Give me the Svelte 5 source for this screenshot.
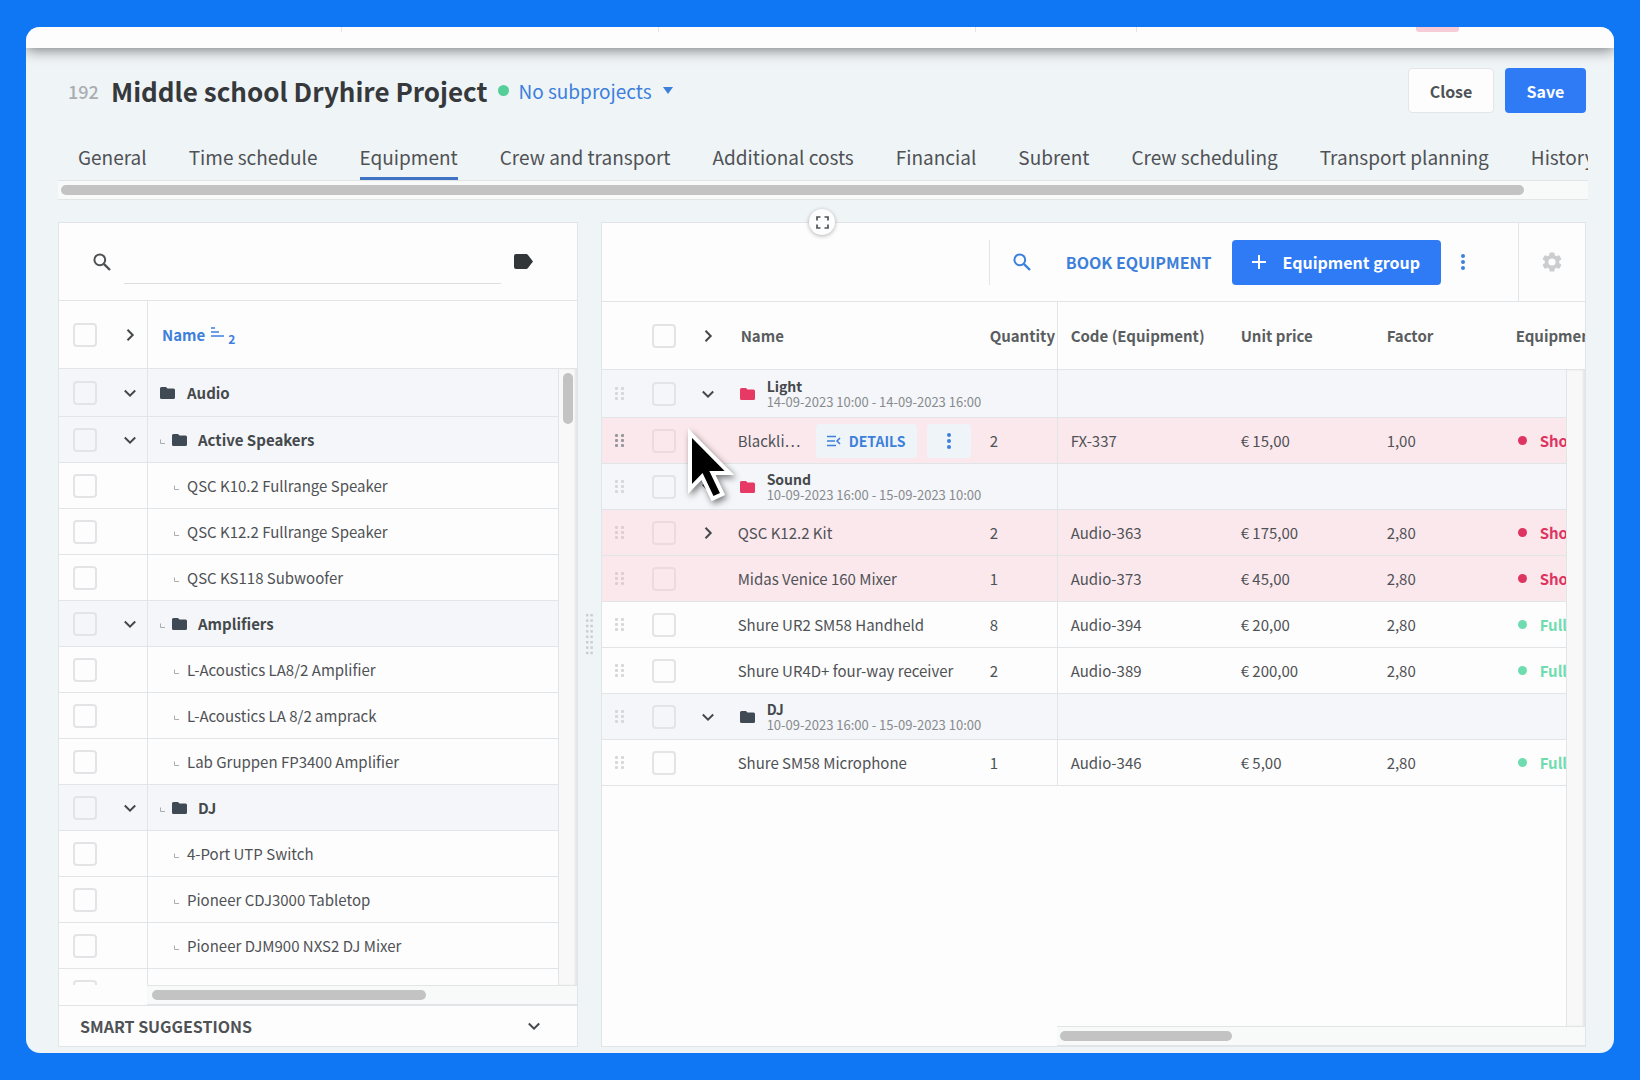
<script lang="ts">
	type TreeRow = { kind: 'root' | 'group' | 'item'; name: string };
	type Status = 'short' | 'full';
	type Line = {
		kind: 'group' | 'item';
		name: string;
		dates?: string;
		late?: boolean;
		expand?: 'open' | 'closed';
		hover?: boolean;
		qty?: number;
		code?: string;
		price?: string;
		factor?: string;
		status?: Status;
	};

	const tabs = [
		'General',
		'Time schedule',
		'Equipment',
		'Crew and transport',
		'Additional costs',
		'Financial',
		'Subrent',
		'Crew scheduling',
		'Transport planning',
		'History'
	];
	let activeTab = $state('Equipment');
	let query = $state('');

	const tree: TreeRow[] = [
		{ kind: 'root', name: 'Audio' },
		{ kind: 'group', name: 'Active Speakers' },
		{ kind: 'item', name: 'QSC K10.2 Fullrange Speaker' },
		{ kind: 'item', name: 'QSC K12.2 Fullrange Speaker' },
		{ kind: 'item', name: 'QSC KS118 Subwoofer' },
		{ kind: 'group', name: 'Amplifiers' },
		{ kind: 'item', name: 'L-Acoustics LA8/2 Amplifier' },
		{ kind: 'item', name: 'L-Acoustics LA 8/2 amprack' },
		{ kind: 'item', name: 'Lab Gruppen FP3400 Amplifier' },
		{ kind: 'group', name: 'DJ' },
		{ kind: 'item', name: '4-Port UTP Switch' },
		{ kind: 'item', name: 'Pioneer CDJ3000 Tabletop' },
		{ kind: 'item', name: 'Pioneer DJM900 NXS2 DJ Mixer' },
		{ kind: 'item', name: '' }
	];

	const lines: Line[] = [
		{ kind: 'group', name: 'Light', dates: '14-09-2023 10:00 - 14-09-2023 16:00', late: true, expand: 'open' },
		{ kind: 'item', name: 'Blackli…', hover: true, qty: 2, code: 'FX-337', price: '€ 15,00', factor: '1,00', status: 'short' },
		{ kind: 'group', name: 'Sound', dates: '10-09-2023 16:00 - 15-09-2023 10:00', late: true, expand: 'open' },
		{ kind: 'item', name: 'QSC K12.2 Kit', expand: 'closed', qty: 2, code: 'Audio-363', price: '€ 175,00', factor: '2,80', status: 'short' },
		{ kind: 'item', name: 'Midas Venice 160 Mixer', qty: 1, code: 'Audio-373', price: '€ 45,00', factor: '2,80', status: 'short' },
		{ kind: 'item', name: 'Shure UR2 SM58 Handheld', qty: 8, code: 'Audio-394', price: '€ 20,00', factor: '2,80', status: 'full' },
		{ kind: 'item', name: 'Shure UR4D+ four-way receiver', qty: 2, code: 'Audio-389', price: '€ 200,00', factor: '2,80', status: 'full' },
		{ kind: 'group', name: 'DJ', dates: '10-09-2023 16:00 - 15-09-2023 10:00', expand: 'open' },
		{ kind: 'item', name: 'Shure SM58 Microphone', qty: 1, code: 'Audio-346', price: '€ 5,00', factor: '2,80', status: 'full' }
	];

	const statusText = { short: 'Shortage', full: 'Fully available' };
</script>

{#snippet chevron(dir: string)}
	<svg class="chevron" viewBox="0 0 14 14" width="14" height="14" aria-hidden="true">
		<path d={dir === 'right' ? 'M4.5 1.8 L9.7 7 L4.5 12.2' : 'M1.8 4.5 L7 9.7 L12.2 4.5'} />
	</svg>
{/snippet}

{#snippet magnifier()}
	<svg viewBox="0 0 18 18" width="18" height="18" aria-hidden="true">
		<circle cx="6.8" cy="6.8" r="5.4" fill="none" stroke="currentColor" stroke-width="2" />
		<path d="M10.8 10.8 L17 17" fill="none" stroke="currentColor" stroke-width="2.4" />
	</svg>
{/snippet}

{#snippet folder()}
	<svg class="folder" viewBox="0 0 15 12" width="15" height="12" aria-hidden="true">
		<path d="M1.5 0H6l1.5 1.5h6A1.5 1.5 0 0 1 15 3v7.5a1.5 1.5 0 0 1-1.5 1.5h-12A1.5 1.5 0 0 1 0 10.5v-9A1.5 1.5 0 0 1 1.5 0z" fill="currentColor" />
	</svg>
{/snippet}

{#snippet kebab()}
	<svg viewBox="0 0 4 16" width="4" height="16" fill="currentColor" aria-hidden="true">
		<circle cx="2" cy="2" r="2" />
		<circle cx="2" cy="8" r="2" />
		<circle cx="2" cy="14" r="2" />
	</svg>
{/snippet}

{#snippet hook()}
	<svg class="hook" viewBox="0 0 5 8" width="5" height="8" aria-hidden="true">
		<path d="M.5 3.5V7.5H5" fill="none" stroke="#a9adb0" />
	</svg>
{/snippet}

<div class="page">
	<div class="window">
		<div class="backdrop-strip">
			<span></span><span></span><span></span><span></span><span></span>
			<i class="pill"></i>
		</div>

		<header class="project">
			<span class="number">192</span>
			<h1>Middle school Dryhire Project</h1>
			<button class="subprojects">
				<i class="dot"></i>
				No subprojects
				<svg viewBox="0 0 10 7" width="10" height="7" aria-hidden="true"><path d="M0 0H10L5 7z" fill="currentColor" /></svg>
			</button>
			<button class="btn close">Close</button>
			<button class="btn primary save">Save</button>
		</header>

		<nav class="tabs">
			{#each tabs as tab}
				<a href="#{tab.toLowerCase().replaceAll(' ', '-')}" class:active={tab === activeTab} onclick={() => (activeTab = tab)}>{tab}</a>
			{/each}
		</nav>
		<div class="scroll-x tabs-scroll"><div class="thumb"></div></div>

		<main class="workspace">
			<section class="panel stock">
				<div class="toolbar stock-bar">
					<label for="stock-search" aria-label="Search equipment">{@render magnifier()}</label>
					<input id="stock-search" type="text" bind:value={query} />
					<button class="icon-btn tag" aria-label="Tags">
						<svg viewBox="0 0 19 15" width="19" height="15" aria-hidden="true"><path d="M2 0H12.2a2 2 0 0 1 1.6.8L19 7.5 13.8 14.2a2 2 0 0 1-1.6.8H2a2 2 0 0 1-2-2V2a2 2 0 0 1 2-2z" fill="currentColor" /></svg>
					</button>
				</div>
				<div class="grid-body">
					<table>
						<colgroup><col class="c-pick" /><col class="c-toggle" /><col /></colgroup>
						<thead>
							<tr>
								<th class="pick"><input type="checkbox" aria-label="Select all stock" /></th>
								<th class="toggle split">{@render chevron('right')}</th>
								<th class="name">
									<div class="sorted">
										Name
										<svg viewBox="0 0 13 10" width="13" height="10" aria-hidden="true"><path d="M0 1H4M0 5H8M0 9H13" stroke="currentColor" stroke-width="1.5" /></svg>
										<small>2</small>
									</div>
								</th>
							</tr>
						</thead>
						<tbody>
							{#each tree as row}
								<tr class={row.kind}>
									<td class="pick"><input type="checkbox" aria-label="Select {row.name}" /></td>
									<td class="toggle split">{#if row.kind !== 'item'}{@render chevron('down')}{/if}</td>
									<td class="name">
										<div class="label">
											{#if row.kind !== 'root' && row.name}{@render hook()}{/if}
											{#if row.kind !== 'item'}{@render folder()}{/if}
											<span>{row.name}</span>
										</div>
									</td>
								</tr>
							{/each}
						</tbody>
					</table>
					<div class="scroll-y"><div class="thumb"></div></div>
				</div>
				<div class="scroll-x stock-scroll"><div class="thumb"></div></div>
				<button class="suggestions">SMART SUGGESTIONS {@render chevron('down')}</button>
			</section>

			<div class="gutter">
				<svg viewBox="0 0 7 41" width="7" height="41" aria-hidden="true">
					{#each Array(8) as _, i}
						<rect x="0" y={i * 5.4} width="2.4" height="2.4" />
						<rect x="4.4" y={i * 5.4} width="2.4" height="2.4" />
					{/each}
				</svg>
			</div>

			<section class="panel planned">
				<div class="toolbar planned-bar">
					<div class="actions">
						<button class="icon-btn find" aria-label="Search">{@render magnifier()}</button>
						<button class="text-btn">BOOK EQUIPMENT</button>
						<button class="btn primary add">
							<svg viewBox="0 0 14 14" width="14" height="14" aria-hidden="true"><path d="M7 0V14M0 7H14" stroke="currentColor" stroke-width="2" /></svg>
							Equipment group
						</button>
						<button class="icon-btn more" aria-label="More actions">{@render kebab()}</button>
					</div>
					<button class="icon-btn gear" aria-label="Settings">
						<svg viewBox="0 0 24 24" width="24" height="24" aria-hidden="true"><path d="M19.14 12.94c.04-.3.06-.61.06-.94 0-.32-.02-.64-.07-.94l2.03-1.58a.49.49 0 0 0 .12-.61l-1.92-3.32a.49.49 0 0 0-.59-.22l-2.39.96c-.5-.38-1.03-.7-1.62-.94l-.36-2.54a.48.48 0 0 0-.48-.41h-3.84a.47.47 0 0 0-.47.41l-.36 2.54c-.59.24-1.13.57-1.62.94l-2.39-.96a.48.48 0 0 0-.59.22L2.74 8.87a.47.47 0 0 0 .12.61l2.03 1.58c-.05.3-.09.63-.09.94s.02.64.07.94l-2.03 1.58a.49.49 0 0 0-.12.61l1.92 3.32c.12.22.37.29.59.22l2.39-.96c.5.38 1.03.7 1.62.94l.36 2.54c.05.24.24.41.48.41h3.84c.24 0 .44-.17.47-.41l.36-2.54c.59-.24 1.13-.56 1.62-.94l2.39.96c.22.08.47 0 .59-.22l1.92-3.32a.47.47 0 0 0-.12-.61l-2.01-1.58zM12 15.6A3.6 3.6 0 1 1 12 8.4a3.6 3.6 0 0 1 0 7.2z" fill="currentColor" /></svg>
					</button>
				</div>
				<div class="grid-body">
					<table>
						<colgroup>
							<col class="c-drag" /><col class="c-check" /><col class="c-expand" /><col class="c-name" /><col class="c-qty" />
							<col class="c-code" /><col class="c-price" /><col class="c-factor" /><col />
						</colgroup>
						<thead>
							<tr>
								<th></th>
								<th class="check"><input type="checkbox" aria-label="Select all lines" /></th>
								<th class="toggle">{@render chevron('right')}</th>
								<th class="name">Name</th>
								<th class="split">Quantity</th>
								<th>Code (Equipment)</th>
								<th>Unit price</th>
								<th>Factor</th>
								<th>Equipment status</th>
							</tr>
						</thead>
						<tbody>
							{#each lines as line}
								<tr class={[line.kind, line.status, line.hover && 'hover']}>
									<td class="drag">
										<svg viewBox="0 0 9 13" width="9" height="13" aria-hidden="true">
											{#each [0, 5, 10] as y}
												<rect x="0" {y} width="3" height="3" rx="1" />
												<rect x="6" {y} width="3" height="3" rx="1" />
											{/each}
										</svg>
									</td>
									<td class="check"><input type="checkbox" aria-label="Select {line.name}" /></td>
									<td class="toggle">
										{#if line.expand}{@render chevron(line.expand === 'open' ? 'down' : 'right')}{/if}
										{#if line.hover}
											<svg class="pointer" viewBox="0 0 46 72" width="46" height="72" aria-hidden="true">
												<path d="M2 3 L2 59 L14 46.500 L24.500 68.500 L34.500 64 L24.500 43 H41.500 z" />
											</svg>
										{/if}
									</td>
									{#if line.kind === 'group'}
										<td class="split" colspan="2">
											<div class="group-label" class:late={line.late}>
												{@render folder()}
												<div>
													<strong>{line.name}</strong>
													<small>{line.dates}</small>
												</div>
											</div>
										</td>
										<td colspan="4"></td>
									{:else}
										<td>
											{#if line.hover}
												<div class="hovered">
													<span>{line.name}</span>
													<button class="chip details">
														<svg viewBox="0 0 14 12" width="14" height="12" fill="none" stroke="currentColor" stroke-width="1.600" aria-hidden="true"><path d="M0 1.500H9M0 6H8M0 10.500H9M13 3L10 6L13 9" /></svg>
														DETAILS
													</button>
													<button class="chip" aria-label="Line actions">{@render kebab()}</button>
												</div>
											{:else}
												{line.name}
											{/if}
										</td>
										<td class="split">{line.qty}</td>
										<td>{line.code}</td>
										<td>{line.price}</td>
										<td>{line.factor}</td>
										<td class="status"><div><i></i>{line.status ? statusText[line.status] : ''}</div></td>
									{/if}
								</tr>
							{/each}
						</tbody>
					</table>
					<div class="scroll-y"></div>
				</div>
				<div class="scroll-x planned-scroll"><div class="thumb"></div></div>
			</section>

			<button class="expand" aria-label="Full screen">
				<svg viewBox="0 0 13 13" width="13" height="13" aria-hidden="true"><path d="M1 4.500V1H4.500M8.500 1H12V4.500M12 8.500V12H8.500M4.500 12H1V8.500" fill="none" stroke="currentColor" stroke-width="1.700" /></svg>
			</button>
		</main>
	</div>
</div>

<style>
	:global(body) {
		margin: 0;
		background: #1077f4;
	}
	* {
		box-sizing: border-box;
	}
	.page {
		--line: #e2e5e8;
		--blue: #2f7bf6;
		--link: #3d80db;
		--ink: #4f5255;
		height: 100vh;
		min-height: 700px;
		padding: 27px 26px;
		color: var(--ink);
		font-family: 'Noto Sans CJK SC', 'Open Sans', sans-serif;
		font-size: 15px;
		line-height: 20px;
	}
	button,
	input {
		font: inherit;
		color: inherit;
	}
	button {
		border: 0;
		padding: 0;
		background: none;
		cursor: pointer;
		white-space: nowrap;
	}
	svg {
		flex: none;
		display: block;
	}
	.window {
		height: 100%;
		display: flex;
		flex-direction: column;
		padding-bottom: 6px;
		background: #eff4f7;
		border-radius: 14px;
		overflow: hidden;
	}

	/* edge of the page that lies behind the project window */
	.backdrop-strip {
		flex: none;
		position: relative;
		display: grid;
		grid-template-columns: 316fr 317fr 317fr 161fr 477fr;
		height: 21px;
		background: #fdfdfd;
		box-shadow: 0 2px 14px rgba(0, 0, 0, 0.5);
	}
	.backdrop-strip span {
		height: 5px;
		border-right: 1px solid var(--line);
	}
	.backdrop-strip span:nth-of-type(5) {
		border: 0;
	}
	.pill {
		position: absolute;
		top: 0;
		right: 155px;
		width: 43px;
		height: 5px;
		background: #f8ccd6;
		border-radius: 0 0 3px 3px;
	}

	.project {
		display: flex;
		align-items: center;
		height: 45px;
		margin: 20px 28px 0 42px;
	}
	.number {
		width: 43px;
		color: #a9adb0;
		font-size: 18px;
		font-weight: 500;
	}
	h1 {
		margin: 0;
		color: #36393c;
		font-size: 26px;
		font-weight: 700;
		line-height: 32px;
		white-space: nowrap;
	}
	.subprojects {
		display: flex;
		align-items: center;
		gap: 11px;
		margin: 0 auto 0 11px;
		color: var(--link);
		font-size: 19px;
	}
	.dot {
		width: 11px;
		height: 11px;
		margin-right: -2px;
		border-radius: 50%;
		background: #55cf97;
	}
	.btn {
		height: 45px;
		border-radius: 4px;
		font-weight: 700;
		font-size: 16px;
	}
	.primary {
		color: #fff;
		background: var(--blue);
	}
	.close {
		width: 86px;
		margin-right: 11px;
		background: #fdfdfd;
		border: 1px solid #e3e6e8;
	}
	.save {
		width: 81px;
	}

	.tabs {
		flex: none;
		display: flex;
		gap: 42px;
		height: 44px;
		margin: 23px 26px 0 33px;
		padding-left: 19px;
		overflow: hidden;
	}
	.tabs a {
		padding: 9px 0 8px;
		border-bottom: 3px solid transparent;
		color: var(--ink);
		font-size: 19px;
		line-height: 24px;
		text-decoration: none;
		white-space: nowrap;
	}
	.tabs .active {
		border-color: #3f74c4;
	}

	.scroll-x {
		flex: none;
		height: 20px;
		padding: 4px 3px;
		border: 1px solid var(--line);
		border-width: 1px 0;
		background: #f8f9f9;
	}
	.scroll-x .thumb {
		height: 10px;
		border-radius: 5px;
		background: #c3c3c3;
	}
	.tabs-scroll {
		margin: 0 26px 0 32px;
	}
	.tabs-scroll .thumb {
		width: 96%;
	}
	.scroll-y {
		position: absolute;
		top: 68px;
		right: 0;
		bottom: 0;
		width: 19px;
		padding: 4px;
		border-left: 1px solid var(--line);
		background: #f8f8f8;
		box-shadow: inset -2px 0 2px rgba(0, 0, 0, 0.08);
	}
	.scroll-y .thumb {
		width: 10px;
		height: 51px;
		border-radius: 5px;
		background: #c3c3c3;
	}

	.workspace {
		position: relative;
		flex: 1;
		display: flex;
		min-height: 0;
		margin: 22px 28px 0 32px;
	}
	.panel {
		display: flex;
		flex-direction: column;
		min-width: 0;
		background: #fdfdfd;
		border: 1px solid var(--line);
	}
	.stock {
		flex: 519 1 0;
	}
	.planned {
		flex: 986 1 0;
	}
	.gutter {
		flex: none;
		display: flex;
		align-items: center;
		justify-content: center;
		width: 23px;
		fill: #c9cdd0;
	}
	.toolbar {
		flex: none;
		display: flex;
		align-items: center;
		height: 78px;
		border-bottom: 1px solid var(--line);
	}
	.icon-btn {
		display: flex;
		align-items: center;
		justify-content: center;
	}
	.stock-bar {
		padding: 0 44px 0 34px;
	}
	.stock-bar input {
		flex: 1;
		min-width: 0;
		height: 44px;
		margin: 0 13px;
		border: 0;
		border-bottom: 1px solid #dcdfe1;
		background: none;
		outline: none;
	}
	.tag {
		color: #333638;
	}

	.grid-body {
		position: relative;
		flex: 1;
		min-height: 0;
		overflow: hidden;
	}
	table {
		width: 100%;
		table-layout: fixed;
		border-collapse: separate;
		border-spacing: 0;
	}
	th,
	td {
		height: 46px;
		padding: 0 0 0 13px;
		border-bottom: 1px solid var(--line);
		text-align: left;
		white-space: nowrap;
	}
	th {
		height: 68px;
		font-weight: 700;
		color: #5a5d60;
		overflow: hidden;
	}
	tbody tr:first-child td {
		height: 48px;
	}
	.root,
	.group {
		background: #f4f6f9;
	}
	.short {
		background: #fbe8ed;
	}
	.split {
		border-right: 1px solid var(--line);
	}
	.c-pick {
		width: 53px;
	}
	.c-toggle {
		width: 36px;
	}
	.c-drag {
		width: 36px;
	}
	.c-check {
		width: 54px;
	}
	.c-expand {
		width: 33px;
	}
	.c-name {
		width: 252px;
	}
	.c-qty {
		width: 81px;
	}
	.c-code {
		width: 170px;
	}
	.c-price {
		width: 146px;
	}
	.c-factor {
		width: 129px;
	}
	input[type='checkbox'] {
		appearance: none;
		display: block;
		width: 24px;
		height: 24px;
		margin: 0;
		border: 2px solid #e2e4e6;
		border-radius: 4px;
	}
	.short input[type='checkbox'] {
		border-color: #ecdadf;
	}
	.pick,
	.check {
		padding-left: 14px;
	}
	.toggle {
		position: relative;
		padding: 0;
	}
	.toggle .chevron {
		margin: auto;
	}
	.chevron {
		fill: none;
		stroke: #44484b;
		stroke-width: 2;
	}
	.label {
		display: flex;
		align-items: center;
	}
	.folder {
		color: #3f4a55;
	}
	.stock .name {
		padding-left: 12px;
	}
	.sorted {
		display: flex;
		align-items: center;
		gap: 6px;
		padding-left: 2px;
		color: var(--link);
	}
	.sorted svg {
		margin-bottom: 5px;
	}
	.sorted small {
		margin: 8px 0 0 -2px;
		color: inherit;
		font-size: 12px;
		line-height: 12px;
	}
	.root .label {
		gap: 12px;
	}
	.group .label {
		gap: 11px;
	}
	.group .hook {
		margin-right: -4px;
	}
	.stock .item .name {
		padding-left: 26px;
	}
	.item .label {
		gap: 8px;
	}
	.stock .root span,
	.stock .group span,
	strong {
		font-weight: 700;
		color: #45494c;
	}
	.stock-scroll {
		margin-left: 88px;
		padding-left: 5px;
	}
	.stock-scroll .thumb {
		width: 65%;
	}
	.suggestions {
		flex: none;
		display: flex;
		align-items: center;
		justify-content: space-between;
		height: 41px;
		padding: 0 36px 0 21px;
		border-top: 1px solid var(--line);
		font-size: 16px;
		font-weight: 700;
	}

	.planned-bar {
		justify-content: flex-end;
		height: 79px;
	}
	.actions {
		display: flex;
		align-items: center;
		height: 45px;
		margin-right: 33px;
		padding-left: 23px;
		border-left: 1px solid var(--line);
	}
	.find,
	.text-btn,
	.more {
		color: var(--link);
	}
	.find {
		margin-right: 35px;
	}
	.text-btn {
		margin-right: 21px;
		font-size: 16px;
		font-weight: 700;
	}
	.add {
		display: flex;
		align-items: center;
		gap: 16px;
		padding: 0 21px 0 20px;
	}
	.more {
		width: 44px;
		height: 44px;
	}
	.gear {
		width: 67px;
		height: 78px;
		border-left: 1px solid var(--line);
		color: #cbcdcf;
	}
	.planned th.name {
		padding-left: 16px;
	}
	.drag {
		fill: #d5d7d9;
	}
	.short .drag {
		fill: #dccdd2;
	}
	.hover .drag {
		fill: #96999c;
	}
	.pointer {
		position: absolute;
		z-index: 2;
		top: 12px;
		left: -4px;
		fill: #000;
		stroke: #fff;
		stroke-width: 4;
		filter: drop-shadow(2px 3px 3px rgba(0, 0, 0, 0.5));
		overflow: visible;
	}
	.group-label {
		display: flex;
		align-items: center;
		gap: 12px;
		padding-left: 2px;
	}
	.late .folder {
		color: #e63963;
	}
	strong,
	small {
		display: block;
		line-height: 16px;
	}
	strong {
		font-size: 14px;
	}
	small {
		color: #888b8e;
		font-size: 13px;
	}
	.hovered {
		display: flex;
		align-items: center;
		gap: 10px;
	}
	.hovered span {
		width: 68px;
	}
	.chip {
		display: flex;
		align-items: center;
		justify-content: center;
		gap: 8px;
		width: 44px;
		height: 34px;
		border-radius: 4px;
		background: #eff4f9;
		color: var(--link);
	}
	.details {
		width: 101px;
		font-size: 14px;
		font-weight: 700;
	}
	.status div {
		display: flex;
		align-items: center;
		gap: 13px;
		padding-left: 2px;
		overflow: hidden;
		color: #6fdcb0;
		font-weight: 700;
	}
	.status i {
		flex: none;
		width: 9px;
		height: 9px;
		border-radius: 50%;
		background: currentColor;
	}
	.short .status div {
		color: #dd3560;
	}
	.planned-scroll {
		margin-left: 455px;
	}
	.planned-scroll .thumb {
		width: 33%;
	}
	.expand {
		position: absolute;
		top: -13px;
		left: 50%;
		display: flex;
		align-items: center;
		justify-content: center;
		width: 26px;
		height: 26px;
		margin-left: -13px;
		border-radius: 50%;
		background: #fdfdfd;
		box-shadow: 0 1px 4px rgba(0, 0, 0, 0.3);
	}
</style>
